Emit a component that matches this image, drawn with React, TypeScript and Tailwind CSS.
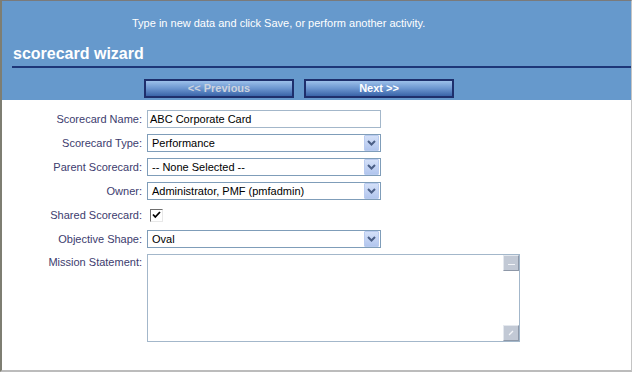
import React from "react";

const Chevron = () => (
  <div className="w-[15px] h-[16px] mr-[1px] flex items-center justify-center bg-gradient-to-b from-[#d4e0f8] to-[#b2c6ee] border border-[#b9cbef] rounded-[1px]">
    <svg width="9" height="6" viewBox="0 0 9 6">
      <path d="M1 1 L4.5 4.5 L8 1" fill="none" stroke="#4b5f86" strokeWidth="2" />
    </svg>
  </div>
);

const Select = ({ value }: { value: string }) => (
  <div className="w-[234px] h-[18px] border border-[#7f9db9] bg-white flex items-center justify-between">
    <span className="pl-[4px] text-[11px] leading-[13px] text-black">{value}</span>
    <Chevron />
  </div>
);

const Label = ({ text, top }: { text: string; top?: boolean }) => (
  <div
    className={
      top
        ? "w-[140px] text-right text-[11px] leading-[13px] text-[#3c3c6e] pt-[2px]"
        : "w-[140px] text-right text-[11px] leading-[13px] text-[#3c3c6e]"
    }
  >
    {text}
  </div>
);

export default function App() {
  return (
    <div className="w-[632px] h-[372px] bg-white border-t border-l-2 border-r border-b-2 border-t-[#7a7a7a] border-l-[#7e7e72] border-r-[#c4c4c4] border-b-[#bcbcbc] flex flex-col font-['Liberation_Sans',Arial,sans-serif] overflow-hidden">
      <div className="h-[99px] bg-[#6699cc] flex flex-col shrink-0">
        <div className="pt-[16px] pl-[130px] text-[11px] leading-[13px] text-white">
          Type in new data and click Save, or perform another activity.
        </div>
        <div className="mt-[14px] pl-[11px] text-[16px] leading-[19px] font-bold text-white">
          scorecard wizard
        </div>
        <div className="mt-[3px] ml-[10px] h-[2px] bg-[#1d3678]" />
        <div className="mt-[11px] pl-[142px] flex gap-[10px]">
          <div className="w-[150px] h-[19px] border-2 border-[#1e2f6c] bg-gradient-to-b from-[#9cc0ea] via-[#6b95cf] to-[#3a64a8] flex items-center justify-center text-[11px] font-bold text-[#cdd3de]">
            &lt;&lt; Previous
          </div>
          <div className="w-[150px] h-[19px] border-2 border-[#1e2f6c] bg-gradient-to-b from-[#9cc0ea] via-[#6b95cf] to-[#3a64a8] flex items-center justify-center text-[11px] font-bold text-white">
            Next &gt;&gt;
          </div>
        </div>
      </div>

      <div className="pt-[10px] flex flex-col gap-[6px]">
        <div className="flex items-center gap-[5px] h-[18px]">
          <Label text="Scorecard Name:" />
          <div className="w-[234px] h-[18px] border border-[#a3b7ca] bg-white flex items-center">
            <span className="pl-[2px] text-[11px] leading-[13px] text-black">ABC Corporate Card</span>
          </div>
        </div>
        <div className="flex items-center gap-[5px] h-[18px]">
          <Label text="Scorecard Type:" />
          <Select value="Performance" />
        </div>
        <div className="flex items-center gap-[5px] h-[18px]">
          <Label text="Parent Scorecard:" />
          <Select value="-- None Selected --" />
        </div>
        <div className="flex items-center gap-[5px] h-[18px]">
          <Label text="Owner:" />
          <Select value="Administrator, PMF (pmfadmin)" />
        </div>
        <div className="flex items-center gap-[5px] h-[18px]">
          <Label text="Shared Scorecard:" />
          <div className="ml-[3px] w-[13px] h-[13px] border border-t-[#6e6e6e] border-l-[#6e6e6e] border-r-[#e8e8e8] border-b-[#e8e8e8] bg-white flex items-center justify-center">
            <svg width="9" height="8" viewBox="0 0 9 8">
              <path d="M1 3.5 L3.3 6 L8 1" fill="none" stroke="#000" strokeWidth="1.8" />
            </svg>
          </div>
        </div>
        <div className="flex items-center gap-[5px] h-[18px]">
          <Label text="Objective Shape:" />
          <Select value="Oval" />
        </div>
        <div className="flex items-start gap-[5px]">
          <Label text="Mission Statement:" top />
          <div className="w-[373px] h-[88px] border border-[#a3b7ca] bg-white flex justify-end">
            <div className="w-[16px] flex flex-col justify-between">
              <div className="w-[16px] h-[16px] bg-[#c2c9d5] border border-t-[#e4e8ee] border-l-[#e4e8ee] border-r-[#8e98a8] border-b-[#8e98a8] flex items-center justify-center">
                <div className="w-[7px] h-[1px] bg-[#f2f4f8] mt-[2px]" />
              </div>
              <div className="w-[16px] h-[16px] bg-[#c2c9d5] border border-t-[#e4e8ee] border-l-[#e4e8ee] border-r-[#8e98a8] border-b-[#8e98a8] flex items-center justify-center">
                <svg width="8" height="8" viewBox="0 0 8 8">
                  <path d="M2 6 L6 2" stroke="#f4f6fa" strokeWidth="1.2" />
                </svg>
              </div>
            </div>
          </div>
        </div>
      </div>
    </div>
  );
}
